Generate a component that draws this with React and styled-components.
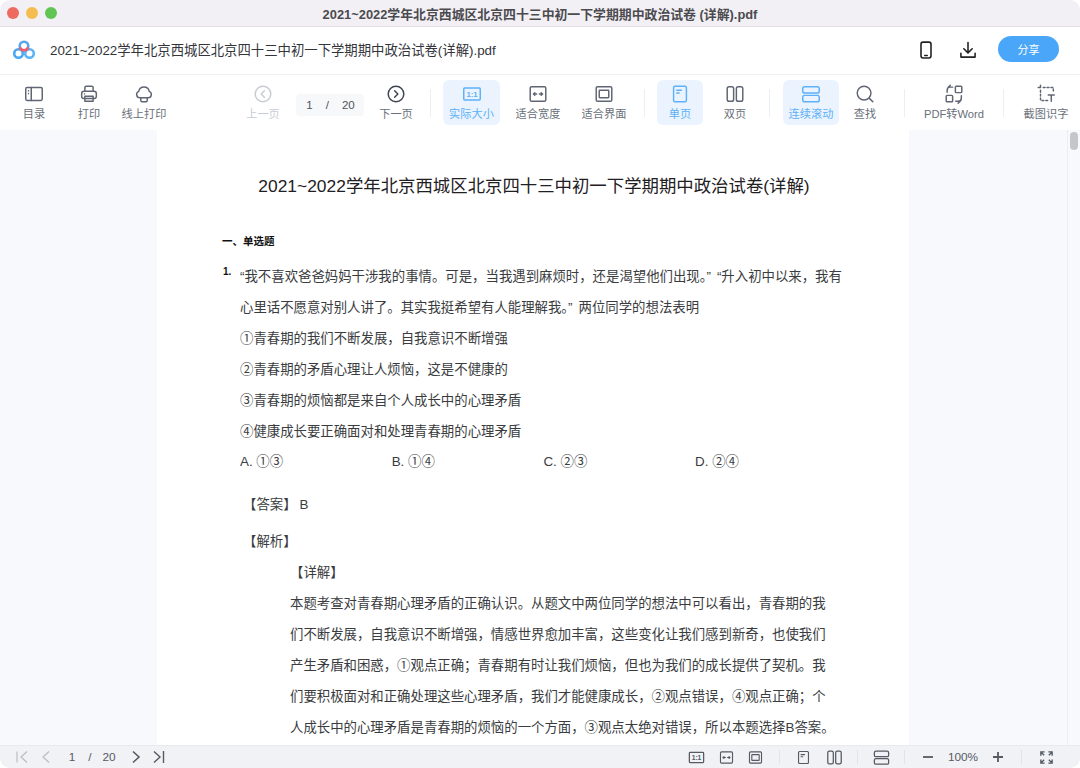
import React from 'react'
import styled, { createGlobalStyle } from 'styled-components'

const FONT = `"Liberation Sans", "Noto Sans CJK SC", sans-serif`

const GlobalStyle = createGlobalStyle`
html, body { margin: 0; padding: 0; background: #fff; }
* { box-sizing: border-box; }
body { font-family: ${FONT}; width: 1080px; height: 768px; overflow: hidden; }
`

const Ico = ({ size = 22, color = '#5f6572', sw = 1.6, children }) => (
  <svg width={size} height={size} viewBox="0 0 24 24" fill="none" stroke={color} strokeWidth={sw} strokeLinecap="round" strokeLinejoin="round">
    {children}
  </svg>
)

const icons = {
  toc: <><rect x="3" y="5" width="18" height="14" rx="1.5" /><path d="M9 5v14M6 8.5v.1M6 11.5v.1" /></>,
  print: <><path d="M7.5 9V5A1.5 1.5 0 0 1 9 3.5h6A1.5 1.5 0 0 1 16.5 5v4" /><rect x="4" y="9" width="16" height="8" rx="2.5" /><path d="M7.5 14.5h9V20h-9z" /><path d="M7 12h.1" /></>,
  cloud: <><path d="M8.5 16h-1a3.5 3.5 0 0 1-1.2-6.8 5.8 5.800 0 0 1 11.4 0A3.500 3.500 0 0 1 16.500 16z" /><path d="M8.500 16v3a1.500 1.500 0 0 0 1.500 1.500h4a1.500 1.500 0 0 0 1.500-1.500v-3" /></>,
  prev: <><circle cx="12" cy="12" r="8.5" /><path d="M13.5 8.5 10 12l3.5 3.5" /></>,
  next: <><circle cx="12" cy="12" r="8.5" /><path d="M10.5 8.5 14 12l-3.5 3.5" /></>,
  fitw: <><rect x="3.5" y="4" width="17" height="16" rx="1.5" /><path d="M7 12h3.5M8.500 10.700 7 12l1.500 1.300M17 12h-3.500M15.500 10.700 17 12l-1.500 1.300" /></>,
  fitp: <><rect x="3.5" y="4" width="17" height="16" rx="1.5" /><rect x="6.8" y="8" width="10.4" height="8" rx=".6" /></>,
  single: <><rect x="5" y="3.5" width="14" height="17" rx="1.5" /><path d="M8.5 8h5M8.5 11H11" /></>,
  double: <><rect x="3.5" y="4" width="7" height="16" rx="2" /><rect x="13.5" y="4" width="7" height="16" rx="2" /></>,
  scroll: <><rect x="3" y="4" width="18" height="7" rx="2" /><rect x="3" y="13.5" width="18" height="7" rx="2" /></>,
  search: <><circle cx="11" cy="11" r="7.5" /><path d="m16.5 16.5 4 4" /></>,
  convert: <><path d="M4.5 10V8A3.500 3.500 0 0 1 8 4.500h2.500M8 2.500 5.500 5" /><rect x="13.5" y="3.5" width="7" height="7" rx="1" /><rect x="3.5" y="13.5" width="7" height="7" rx="1" /><path d="M20 14v2.500a3.500 3.500 0 0 1-3.500 3.500H14M16.500 22l2.500-2.500" /></>,
  crop: <><path d="M6 2.500V5H3.500" /><path d="M9 5h11v5M6 8v11h8" strokeDasharray="2 2.2" /><path d="M14.5 13H21M17.75 13v7" /></>,
  phone: <><rect x="6" y="2.5" width="12" height="19" rx="2.5" /><path d="M10.5 18.5h3" /></>,
  download: <><path d="M12 3v12M7 10.500l5 5 5-5" /><path d="M3.500 16v4.500h17V16" /></>,
}

const Icon = ({ name, ...rest }) => <Ico {...rest}>{icons[name]}</Ico>

const Logo = () => (
  <svg width="24" height="24" viewBox="0 0 24 24" fill="none" strokeWidth="2.6">
    <circle cx="6.5" cy="15.5" r="4.3" stroke="#4aa8f5" />
    <circle cx="17.5" cy="15.5" r="4.3" stroke="#5bb4f8" />
    <circle cx="12" cy="8" r="4.3" stroke="#5aa6ea" />
    <path d="M7.9 9.300a4.300 4.300 0 0 0 8.200 0" stroke="#ee5f6b" />
  </svg>
)

const RatioIcon = ({ size, color }) => (
  <svg width={size} height={size} viewBox="0 0 24 24" fill="none" stroke={color} strokeWidth="1.6">
    <rect x="3" y="5.5" width="18" height="13" rx="1" />
    <text x="12" y="15.3" fontSize="8.5" fontWeight="700" fontFamily="Liberation Sans" textAnchor="middle" fill={color} stroke="none">1:1</text>
  </svg>
)

const Window = styled.div`
  width: 1080px;
  height: 768px;
  display: flex;
  flex-direction: column;
  border-radius: 10px;
  overflow: hidden;
  background: #fff;
`

const TitleBar = styled.div`
  position: relative;
  height: 27px;
  flex: none;
  display: flex;
  align-items: center;
  justify-content: center;
  background: #f2f0f5;
  border-bottom: 1px solid #e2e0e4;
  font-size: 12.87px;
  font-weight: 700;
  color: #4b4a4e;
`

const Lights = styled.div`
  position: absolute;
  left: 7px;
  top: 7px;
  display: flex;
  gap: 7px;
`

const Light = styled.span`
  width: 12px;
  height: 12px;
  border-radius: 50%;
  background: ${p => p.$c};
`

const Header = styled.div`
  height: 48px;
  flex: none;
  display: flex;
  align-items: center;
  padding: 0 21px 2px 12px;
  border-bottom: 1px solid #f0f0f2;
`

const DocName = styled.div`
  margin-left: 14px;
  flex: 1;
  font-size: 13.36px;
  color: #33353a;
  white-space: nowrap;
`

const HeaderBtn = styled.div`
  display: flex;
  margin-right: ${p => p.$mr}px;
`

const Share = styled.div`
  width: 61px;
  height: 26px;
  margin-bottom: 1px;
  border-radius: 13px;
  background: #4aa6f8;
  color: #fff;
  font-size: 11px;
  display: flex;
  align-items: center;
  justify-content: center;
`

const Toolbar = styled.div`
  height: 55px;
  flex: none;
  display: flex;
  align-items: center;
  padding-left: 8px;
`

const Tool = styled.div`
  width: ${p => p.$w}px;
  margin-left: ${p => p.$ml || 0}px;
  height: 45px;
  flex: none;
  display: flex;
  flex-direction: column;
  align-items: center;
  justify-content: space-between;
  padding: 3px 0 4px;
  border-radius: 6px;
  background: ${p => (p.$active ? '#ebf4fe' : 'transparent')};
  color: ${p => (p.$active ? '#5db0f9' : p.$off ? '#c8ccd2' : '#6a7079')};
  font-size: 11.2px;
  line-height: 13px;
  white-space: nowrap;
`

const PageBox = styled.div`
  width: 68px;
  height: 22px;
  margin: 5px 0 0 10px;
  flex: none;
  border-radius: 4px;
  background: #f7f8fa;
  color: #4e525a;
  font-size: 11.5px;
  display: flex;
  align-items: center;
  justify-content: center;
  gap: 13px;
  padding-left: 1px;
`

const Sep = styled.div`
  width: 1px;
  height: 28px;
  flex: none;
  margin-left: ${p => p.$ml}px;
  background: #eceef1;
`

const Main = styled.div`
  flex: 1;
  min-height: 0;
  display: flex;
  background: #f8f9fc;
  overflow: hidden;
`

const Stage = styled.div`
  flex: 1;
  padding-left: 157px;
`

const Paper = styled.div`
  width: 752px;
  height: 700px;
  background: #fff;
  color: #3a3c40;
  font-size: 13.4px;
  padding: 42px 0 0 65px;
`

const DocTitle = styled.div`
  width: 624px;
  font-size: 17.4px;
  color: #1f2023;
  text-align: center;
  line-height: 28px;
  white-space: nowrap;
`

const SectionHead = styled.div`
  margin-top: 31px;
  height: 20px;
  line-height: 20px;
  font-size: 10.5px;
  font-weight: 700;
  color: #111;
`

const Question = styled.div`
  margin-top: 10px;
  position: relative;
  padding-left: 18px;
`

const Num = styled.span`
  position: absolute;
  left: 1px;
  top: 5px;
  font-size: 10px;
  font-weight: 700;
  color: #111;
`

const Line = styled.div`
  height: 31px;
  line-height: 31px;
  white-space: nowrap;
  margin-left: ${p => p.$ml || 0}px;
  margin-top: ${p => p.$mt || 0}px;
`

const Quote = styled.span`
  margin: 0 ${p => p.$r || 0}px 0 ${p => p.$l || 0}px;
`

const Grade = styled.span`
  margin-left: 3px;
`

const Options = styled.div`
  display: grid;
  grid-template-columns: repeat(4, 151.7px);
  height: 30px;
  line-height: 30px;
`

const ScrollTrack = styled.div`
  width: 13px;
  flex: none;
  border-left: 1px solid #eceef1;
  padding: 2px 0 0 2px;
`

const Thumb = styled.div`
  width: 8px;
  height: 18px;
  border-radius: 4px;
  background: #c4c6ca;
`

const StatusBar = styled.div`
  height: 23px;
  flex: none;
  display: flex;
  align-items: center;
  background: #f1f2f6;
  border-top: 1px solid #e9eaee;
  color: #555a63;
  font-size: 11.8px;
`

const StatusItem = styled.div`
  width: ${p => p.$w}px;
  margin-left: ${p => p.$ml || 0}px;
  flex: none;
  display: flex;
  justify-content: center;
  color: ${p => (p.$off ? '#b9bcc3' : '#555a63')};
`

const Divider = styled.div`
  width: 1px;
  height: 14px;
  flex: none;
  margin-left: ${p => p.$ml}px;
  background: #e1e3e8;
`

const LINES = [
  '本题考查对青春期心理矛盾的正确认识。从题文中两位同学的想法中可以看出，青春期的我',
  '们不断发展，自我意识不断增强，情感世界愈加丰富，这些变化让我们感到新奇，也使我们',
  '产生矛盾和困惑，①观点正确；青春期有时让我们烦恼，但也为我们的成长提供了契机。我',
  '们要积极面对和正确处理这些心理矛盾，我们才能健康成长，②观点错误，④观点正确；个',
  '人成长中的心理矛盾是青春期的烦恼的一个方面，③观点太绝对错误，所以本题选择B答案。',
]

export default function App() {
  const blue = '#5db0f9'
  const gray = '#555a63'
  return (
    <Window>
      <GlobalStyle />
      <TitleBar>
        <Lights>
          <Light $c="#ee6a5e" />
          <Light $c="#f5bd4f" />
          <Light $c="#61c554" />
        </Lights>
        2021~2022学年北京西城区北京四十三中初一下学期期中政治试卷 (详解).pdf
      </TitleBar>
      <Header>
        <Logo />
        <DocName>2021~2022学年北京西城区北京四十三中初一下学期期中政治试卷(详解).pdf</DocName>
        <HeaderBtn $mr={22}><Icon name="phone" size={20} color="#222" sw={1.9} /></HeaderBtn>
        <HeaderBtn $mr={20}><Icon name="download" size={20} color="#222" sw={1.9} /></HeaderBtn>
        <Share>分享</Share>
      </Header>
      <Toolbar>
        <Tool $w={52}><Icon name="toc" />目录</Tool>
        <Tool $w={58}><Icon name="print" />打印</Tool>
        <Tool $w={52}><Icon name="cloud" />线上打印</Tool>
        <Tool $w={46} $ml={70} $off><Icon name="prev" color="#c8ccd2" />上一页</Tool>
        <PageBox><span>1</span><span>/</span><span>20</span></PageBox>
        <Tool $w={44} $ml={10}><Icon name="next" color="#3f4550" />下一页</Tool>
        <Sep $ml={12} />
        <Tool $w={57} $ml={12} $active><RatioIcon size={22} color={blue} />实际大小</Tool>
        <Tool $w={56} $ml={10}><Icon name="fitw" />适合宽度</Tool>
        <Tool $w={56} $ml={10}><Icon name="fitp" />适合界面</Tool>
        <Sep $ml={12} />
        <Tool $w={46} $ml={12} $active><Icon name="single" color={blue} />单页</Tool>
        <Tool $w={46} $ml={9}><Icon name="double" />双页</Tool>
        <Sep $ml={11} />
        <Tool $w={56} $ml={13} $active><Icon name="scroll" color={blue} />连续滚动</Tool>
        <Tool $w={44} $ml={4}><Icon name="search" />查找</Tool>
        <Sep $ml={17} />
        <Tool $w={68} $ml={15}><Icon name="convert" />PDF转Word</Tool>
        <Sep $ml={15} />
        <Tool $w={52} $ml={16}><Icon name="crop" />截图识字</Tool>
      </Toolbar>
      <Main>
        <Stage>
          <Paper>
            <DocTitle>2021~2022学年北京西城区北京四十三中初一下学期期中政治试卷(详解)</DocTitle>
            <SectionHead>一、单选题</SectionHead>
            <Question>
              <Num>1.</Num>
              <Line>“我不喜欢爸爸妈妈干涉我的事情。可是，当我遇到麻烦时，还是渴望他们出现。<Quote $r={6}>”</Quote>“升入初中以来，我有</Line>
              <Line>心里话不愿意对别人讲了。其实我挺希望有人能理解我。<Quote $r={6}>”</Quote>两位同学的想法表明</Line>
              <Line>①青春期的我们不断发展，自我意识不断增强</Line>
              <Line>②青春期的矛盾心理让人烦恼，这是不健康的</Line>
              <Line>③青春期的烦恼都是来自个人成长中的心理矛盾</Line>
              <Line>④健康成长要正确面对和处理青春期的心理矛盾</Line>
              <Options>
                <span>A. ①③</span>
                <span>B. ①④</span>
                <span>C. ②③</span>
                <span>D. ②④</span>
              </Options>
              <Line $ml={3} $mt={12}>【答案】<Grade>B</Grade></Line>
              <Line $ml={3} $mt={6}>【解析】</Line>
              <Line $ml={50}>【详解】</Line>
              {LINES.map(l => <Line key={l} $ml={50}>{l}</Line>)}
            </Question>
          </Paper>
        </Stage>
        <ScrollTrack><Thumb /></ScrollTrack>
      </Main>
      <StatusBar>
        <StatusItem $w={24} $ml={10} $off>
          <svg width="16" height="16" viewBox="0 0 16 16" fill="none" stroke="currentColor" strokeWidth="1.2"><path d="M3 2.5v11M13 2.5 7 8l6 5.5" /></svg>
        </StatusItem>
        <StatusItem $w={24} $off>
          <svg width="16" height="16" viewBox="0 0 16 16" fill="none" stroke="currentColor" strokeWidth="1.2"><path d="M11 2.5 5 8l6 5.5" /></svg>
        </StatusItem>
        <StatusItem $w={28}>1</StatusItem>
        <StatusItem $w={8}>/</StatusItem>
        <StatusItem $w={30}>20</StatusItem>
        <StatusItem $w={24}>
          <svg width="16" height="16" viewBox="0 0 16 16" fill="none" stroke="currentColor" strokeWidth="1.6"><path d="m5 2.5 6 5.5-6 5.5" /></svg>
        </StatusItem>
        <StatusItem $w={22}>
          <svg width="16" height="16" viewBox="0 0 16 16" fill="none" stroke="currentColor" strokeWidth="1.4"><path d="m3 2.5 6 5.5-6 5.5M12.5 2v12" /></svg>
        </StatusItem>
        <StatusItem $w={30} $ml={511}><RatioIcon size={19} color={gray} /></StatusItem>
        <StatusItem $w={30}><Icon name="fitw" size={17} color={gray} /></StatusItem>
        <StatusItem $w={28}><Icon name="fitp" size={17} color={gray} /></StatusItem>
        <Divider $ml={10} />
        <StatusItem $w={24} $ml={11}><Icon name="single" size={17} color={gray} /></StatusItem>
        <StatusItem $w={34} $ml={2}><Icon name="double" size={19} color={gray} /></StatusItem>
        <Divider $ml={6} />
        <StatusItem $w={24} $ml={11}><Icon name="scroll" size={19} color={gray} /></StatusItem>
        <Divider $ml={11} />
        <StatusItem $w={24} $ml={11}>
          <svg width="14" height="14" viewBox="0 0 14 14" fill="none" stroke="currentColor" strokeWidth="1.8"><path d="M2 7h10" /></svg>
        </StatusItem>
        <StatusItem $w={46}>100%</StatusItem>
        <StatusItem $w={24}>
          <svg width="14" height="14" viewBox="0 0 14 14" fill="none" stroke="currentColor" strokeWidth="1.8"><path d="M2 7h10M7 2v10" /></svg>
        </StatusItem>
        <Divider $ml={11} />
        <StatusItem $w={24} $ml={12}>
          <svg width="15" height="15" viewBox="0 0 16 16" fill="none" stroke="currentColor" strokeWidth="1.5"><path d="M2 6V2h4M2 2l3.500 3.500M10 2h4v4M14 2l-3.500 3.500M2 10v4h4M2 14l3.500-3.500M14 10v4h-4M14 14l-3.500-3.500" /></svg>
        </StatusItem>
      </StatusBar>
    </Window>
  )
}
